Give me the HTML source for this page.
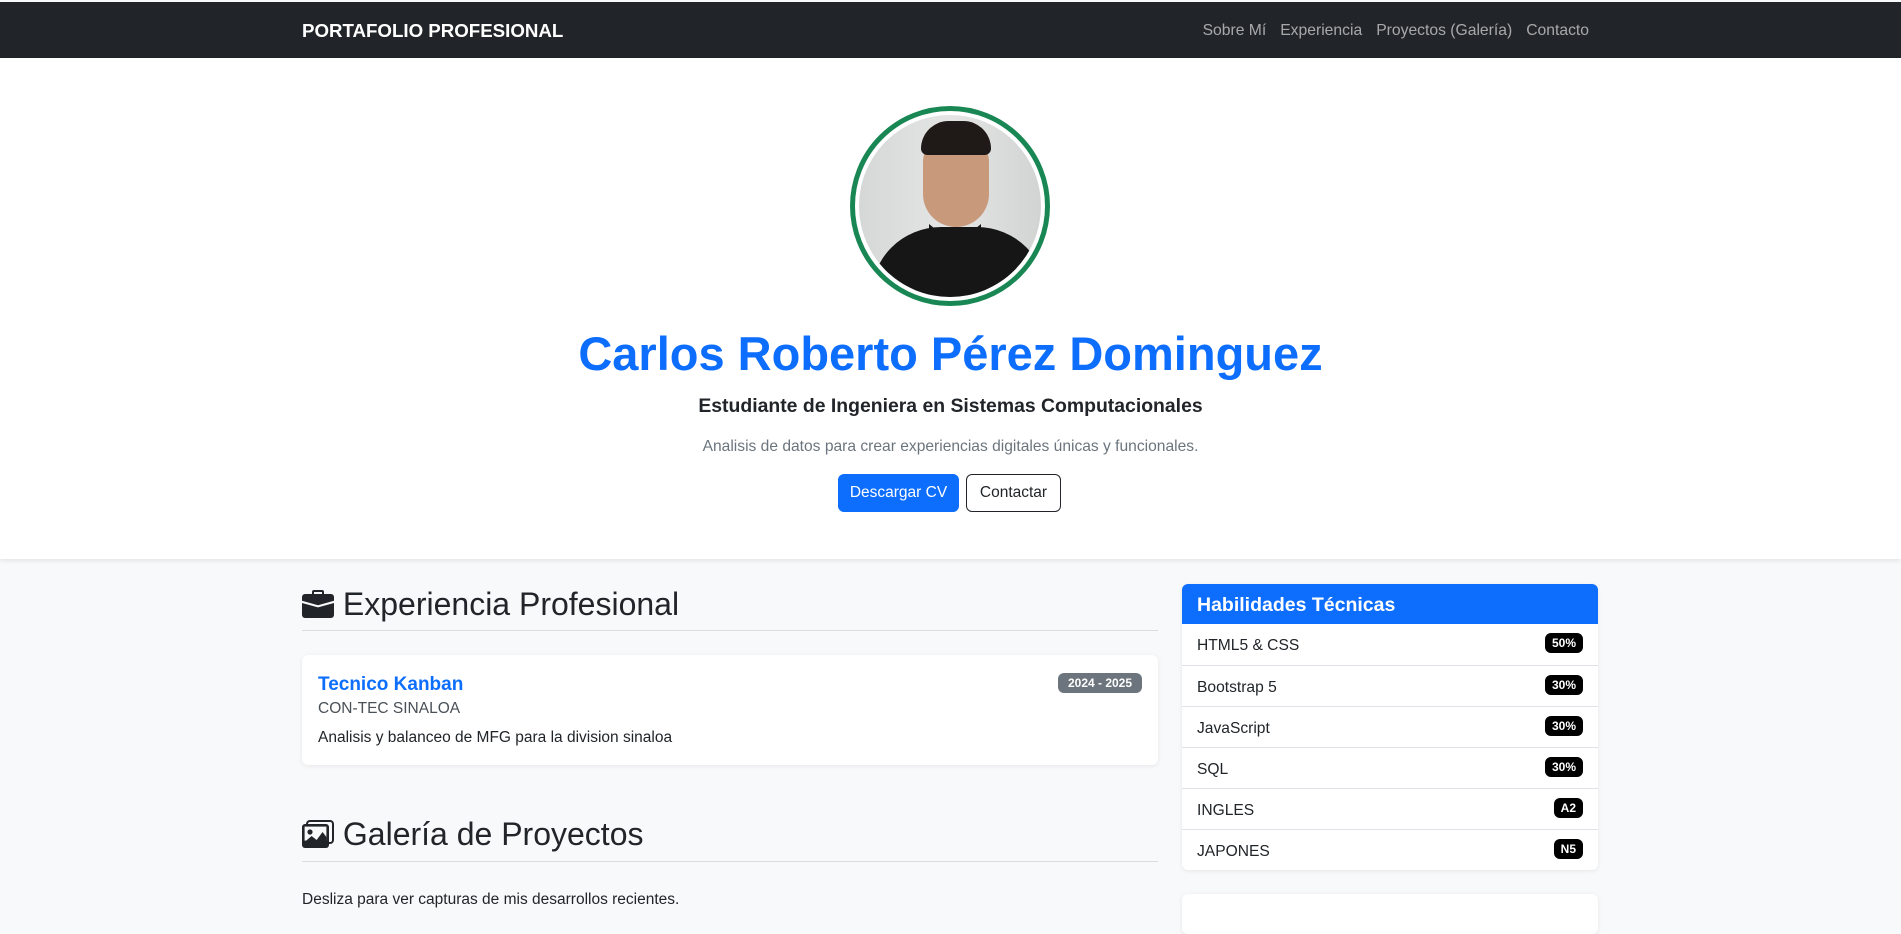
<!DOCTYPE html>
<html><head><meta charset="utf-8"><style>
*{box-sizing:border-box;margin:0;padding:0}
body{width:1901px;height:906px;overflow:hidden;font-family:"Liberation Sans",sans-serif;color:#212529;background:#f8f9fa;font-size:16px}
.nav{position:absolute;top:2px;left:0;width:1901px;height:56px;background:#212529}
.brand{position:absolute;left:302px;top:18px;color:#fff;font-weight:bold;font-size:18.7px}
.links{position:absolute;right:312px;top:20px;color:rgba(255,255,255,.6);font-size:15.7px}
.links span{margin-left:14px}
.hero{position:absolute;top:58px;left:0;width:1901px;height:501px;background:#fff;box-shadow:0 2px 4px rgba(0,0,0,.08);text-align:center}
.avatar{position:absolute;left:850px;top:48px;width:200px;height:200px;border-radius:50%;border:5px solid #198754;background:#fff;padding:4px}
.photo{width:100%;height:100%;border-radius:50%;overflow:hidden;position:relative;background:linear-gradient(90deg,#d6d8d8,#e4e5e4 50%,#d2d4d3)}
.hair{position:absolute;left:62px;top:6px;width:70px;height:34px;border-radius:35px 35px 8px 8px;background:#1f1a17}
.face{position:absolute;left:64px;top:18px;width:66px;height:94px;border-radius:32px 32px 36px 36px;background:#c9997c}
.shirt{position:absolute;left:12px;top:112px;width:176px;height:120px;border-radius:70px 70px 0 0;background:#161616}
.collar{position:absolute;left:70px;top:100px;width:52px;height:30px;background:#161616;clip-path:polygon(0 30%,50% 100%,100% 30%,100% 100%,0 100%)}
h1{position:absolute;left:0;width:100%;top:268px;font-size:47px;color:#0d6efd;font-weight:bold}
h5{position:absolute;left:0;width:100%;top:337px;font-size:19.4px;font-weight:bold}
.lead{position:absolute;left:0;width:100%;top:380px;color:#6c757d;font-size:15.6px}
.btn{position:absolute;top:416px;height:38px;border-radius:6px;font-size:15.5px;line-height:36px;text-align:center}
.b1{left:838px;width:121px;background:#0d6efd;color:#fff;border:1px solid #0d6efd}
.b2{left:966px;width:95px;border:1px solid #212529;color:#212529}
h2{position:absolute;left:302px;font-size:32px;font-weight:normal}
.hr{position:absolute;left:302px;width:856px;height:1px;background:#dcdddf}
.card{position:absolute;background:#fff;border-radius:6px;box-shadow:0 1px 4px rgba(0,0,0,.08)}
.badge{position:absolute;font-size:12px;font-weight:bold;color:#fff;border-radius:6px;text-align:center}
.skill{height:41px;border-top:1px solid #dee2e6;position:relative;padding-left:15px;line-height:43px;font-size:15.6px}
.skill .badge{right:15px;top:9px;height:20px;line-height:20px;background:#000;padding:0 7px}
</style></head><body>
<div class="nav"><div class="brand">PORTAFOLIO PROFESIONAL</div>
<div class="links"><span>Sobre Mí</span><span>Experiencia</span><span>Proyectos (Galería)</span><span>Contacto</span></div></div>
<div class="hero">
<div class="avatar"><div class="photo"><div class="shirt"></div><div class="face"></div><div class="hair"></div><div class="collar"></div></div></div>
<h1>Carlos Roberto Pérez Dominguez</h1>
<h5>Estudiante de Ingeniera en Sistemas Computacionales</h5>
<div class="lead">Analisis de datos para crear experiencias digitales únicas y funcionales.</div>
<div class="btn b1">Descargar CV</div><div class="btn b2">Contactar</div>
</div>
<h2 style="top:586px"><svg width="32" height="28" viewBox="0 0 16 14" style="vertical-align:-3px"><path d="M6 0h4a1 1 0 0 1 1 1v1h3.5A1.5 1.5 0 0 1 16 3.5v1.9L8 7.6 0 5.4V3.5A1.5 1.5 0 0 1 1.5 2H5V1a1 1 0 0 1 1-1zm0 1v1h4V1zM0 6.5l8 2.2 8-2.2v6A1.5 1.5 0 0 1 14.5 14h-13A1.5 1.5 0 0 1 0 12.5z" fill="#212529"/></svg> Experiencia Profesional</h2>
<div class="hr" style="top:630px"></div>
<div class="card" style="left:302px;top:655px;width:856px;height:110px">
<div style="position:absolute;left:16px;top:19px;color:#0d6efd;font-size:19px;font-weight:bold">Tecnico Kanban</div>
<div style="position:absolute;left:16px;top:45px;color:#495057;font-size:15.5px">CON-TEC SINALOA</div>
<div style="position:absolute;left:16px;top:74px;font-size:15.5px">Analisis y balanceo de MFG para la division sinaloa</div>
<div class="badge" style="right:16px;top:18px;width:84px;height:20px;line-height:20px;background:#6c757d">2024 - 2025</div>
</div>
<h2 style="top:816px"><svg width="32" height="28" viewBox="0 0 16 14" style="vertical-align:-3px"><rect x="2.5" y="0.5" width="13" height="11" rx="1.5" fill="none" stroke="#212529"/><rect x="0" y="2" width="13.5" height="12" rx="1.5" fill="#212529"/><rect x="1.3" y="3.3" width="10.9" height="7" fill="#f8f9fa"/><circle cx="4" cy="6" r="1.3" fill="#212529"/><path d="M1.3 11l3.5-3 2.5 2 3-4 1.9 2.5V11z" fill="#212529"/></svg> Galería de Proyectos</h2>
<div class="hr" style="top:861px"></div>
<div style="position:absolute;left:302px;top:891px;font-size:15.5px">Desliza para ver capturas de mis desarrollos recientes.</div>
<div class="card" style="left:1182px;top:584px;width:416px;height:286px;overflow:hidden">
<div style="height:40px;background:#0d6efd;color:#fff;font-weight:bold;font-size:19.5px;line-height:42px;padding-left:15px">Habilidades Técnicas</div>
<div class="skill" style="border-top:0">HTML5 &amp; CSS<span class="badge">50%</span></div>
<div class="skill">Bootstrap 5<span class="badge">30%</span></div>
<div class="skill">JavaScript<span class="badge">30%</span></div>
<div class="skill">SQL<span class="badge">30%</span></div>
<div class="skill">INGLES<span class="badge">A2</span></div>
<div class="skill">JAPONES<span class="badge">N5</span></div>
</div>
<div class="card" style="left:1182px;top:894px;width:416px;height:40px"></div>
</body></html>
